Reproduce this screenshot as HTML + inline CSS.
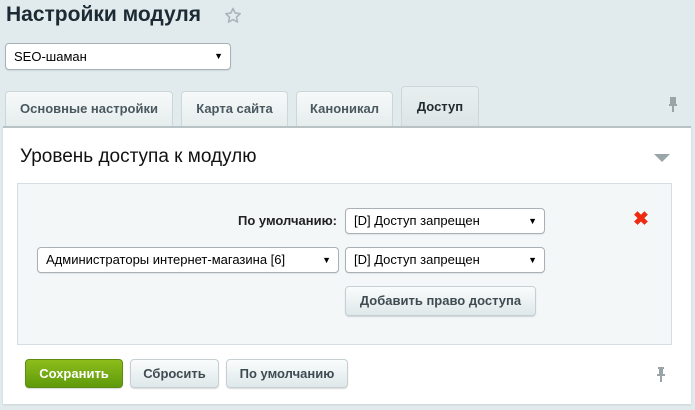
<!DOCTYPE html>
<html><head><meta charset="utf-8"><style>
*{box-sizing:border-box;margin:0;padding:0}
body{width:695px;height:410px;background:#e1eaec;font-family:"Liberation Sans",sans-serif;position:relative;overflow:hidden;color:#000}
.abs{position:absolute}
h1{position:absolute;left:6px;top:3px;font-size:21px;font-weight:bold;color:#1c2a33}
.sel{position:absolute;background:#fff;border:1px solid #a8b1b5;border-radius:4px;font-size:13px;padding-left:8px;line-height:24px;box-shadow:0 1px 1px rgba(0,0,0,.08)}
.sel:after{content:"▼";position:absolute;right:7px;top:0;font-size:9px}
.tab{position:absolute;top:91px;height:36px;background:linear-gradient(#f6f9f9,#e6eded);border:1px solid #cdd6d8;border-bottom:none;border-radius:4px 4px 0 0;font-size:13px;font-weight:bold;color:#4a5860;text-align:center;line-height:33px}
.btn{position:absolute;border-radius:4px;font-size:13px;font-weight:bold;text-align:center;background:linear-gradient(#fafcfc,#dfe8ea);border:1px solid #c6d0d3;color:#3f4b52;box-shadow:0 1px 1px rgba(0,0,0,.15)}
</style></head><body>
<h1>Настройки модуля</h1>
<svg class="abs" style="left:224px;top:7px" width="18" height="18" viewBox="0 0 18 18"><path d="M9 1.5l2.2 4.6 5 .6-3.7 3.4 1 5-4.5-2.5-4.5 2.5 1-5L1.8 6.7l5-.6z" fill="none" stroke="#a9b6bb" stroke-width="1.6" stroke-linejoin="round"/></svg>
<div class="sel" style="left:5px;top:43px;width:226px;height:27px;line-height:25px">SEO-шаман</div>
<div class="tab" style="left:5px;width:168px">Основные настройки</div>
<div class="tab" style="left:181px;width:107px">Карта сайта</div>
<div class="tab" style="left:296px;width:97px">Каноникал</div>
<div class="tab" style="left:401px;top:86px;height:41px;width:78px;background:linear-gradient(#e9efef,#dce5e7);color:#1f2a30;line-height:40px">Доступ</div>
<svg class="abs" style="left:668px;top:97px" width="10" height="16" viewBox="0 0 10 16"><path d="M2 1h6M3 1v6M7 1v6M1 8h8M5 8v7" stroke="#9aa4a8" stroke-width="2" fill="none"/><rect x="3" y="1" width="4" height="7" fill="#9aa4a8"/></svg>
<div class="abs" style="left:3px;top:126px;width:688px;height:278px;background:#fff;border-top:2px solid #b9c3c6;box-shadow:0 1px 2px rgba(0,0,0,.1)"></div>
<div class="abs" style="left:20px;top:146px;font-size:19px;color:#111">Уровень доступа к модулю</div>
<div class="abs" style="left:654px;top:154px;width:0;height:0;border-left:8px solid transparent;border-right:8px solid transparent;border-top:8px solid #9aa5aa"></div>
<div class="abs" style="left:17px;top:183px;width:655px;height:162px;background:#f3f7f8;border:1px solid #d2dee2"></div>
<div class="abs" style="left:238px;top:213px;font-size:13px;font-weight:bold;color:#222">По умолчанию:</div>
<div class="sel" style="left:345px;top:208px;width:200px;height:26px">[D] Доступ запрещен</div>
<div class="abs" style="left:633px;top:208px;font-size:19px;font-weight:bold;color:#ee2a10">✖</div>
<div class="sel" style="left:37px;top:247px;width:302px;height:26px">Администраторы интернет-магазина [6]</div>
<div class="sel" style="left:345px;top:247px;width:200px;height:26px">[D] Доступ запрещен</div>
<div class="btn" style="left:345px;top:286px;width:191px;height:30px;line-height:28px">Добавить право доступа</div>
<div class="btn" style="left:25px;top:359px;width:98px;height:29px;line-height:27px;background:linear-gradient(#8dbd1c,#5f9a0a);border-color:#5b8e10;color:#fff">Сохранить</div>
<div class="btn" style="left:130px;top:359px;width:89px;height:29px;line-height:27px">Сбросить</div>
<div class="btn" style="left:226px;top:359px;width:122px;height:29px;line-height:27px">По умолчанию</div>
<svg class="abs" style="left:656px;top:367px" width="10" height="16" viewBox="0 0 10 16"><path d="M2 1h6M1 8h8M5 8v7" stroke="#9aa4a8" stroke-width="2" fill="none"/><rect x="3" y="1" width="4" height="7" fill="#9aa4a8"/></svg>
</body></html>
